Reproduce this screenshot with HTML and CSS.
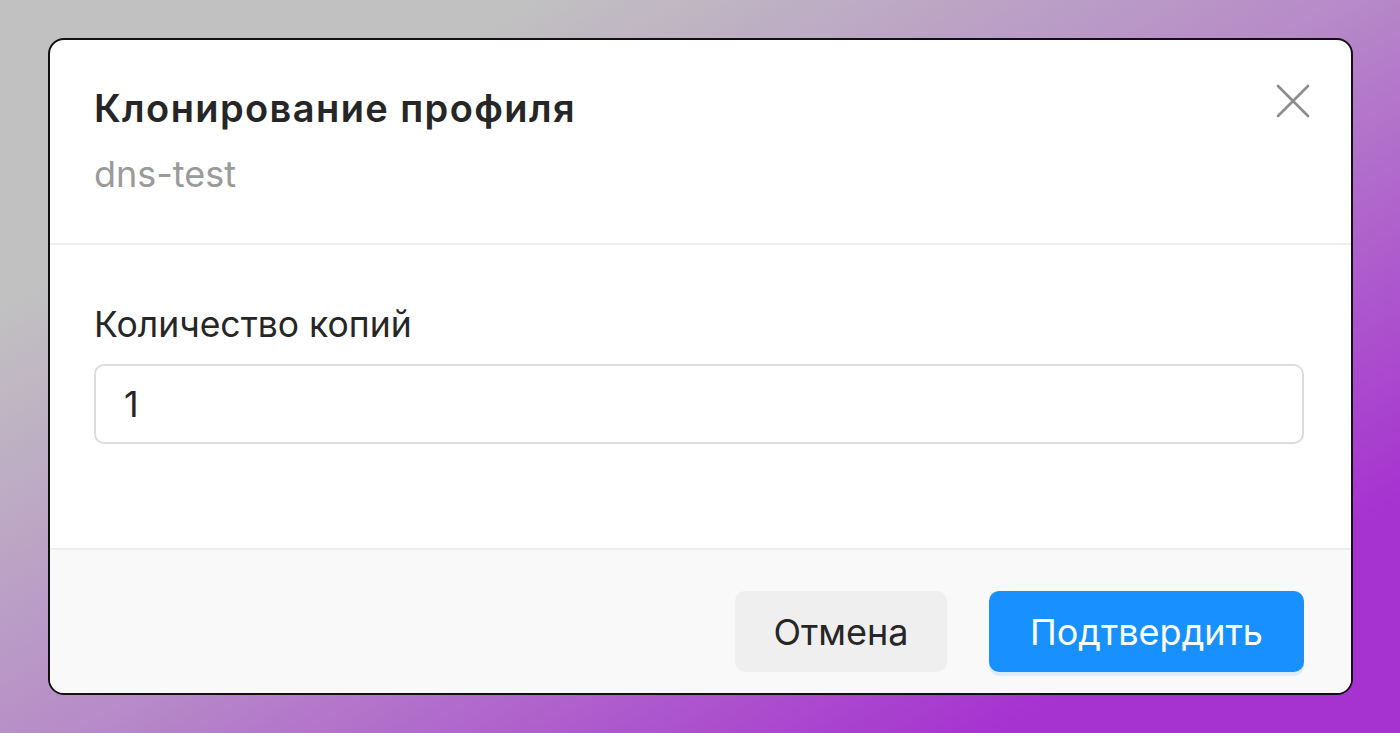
FILE: index.html
```html
<!DOCTYPE html>
<html lang="ru">
<head>
    <meta charset="UTF-8">
    <meta name="viewport" content="width=device-width, initial-scale=1.0">
    <title>Клонирование профиля</title>
    <link rel="stylesheet" href="styles.css">
</head>
<body>
    <!-- Clone profile dialog -->
    <div class="modal">
        <div class="modal-header">
            <div class="modal-titles">
                <h1 class="modal-title">Клонирование профиля</h1>
                <div class="modal-subtitle">dns-test</div>
            </div>
            <button class="close-button" aria-label="Закрыть">
                <svg width="34" height="34" viewBox="0 0 34 34">
                    <path d="M2 2 L32 32 M32 2 L2 32" stroke="#8c8c8c" stroke-width="2.6" stroke-linecap="round" fill="none"/>
                </svg>
            </button>
        </div>

        <div class="modal-body">
            <label class="field-label" for="copies">Количество копий</label>
            <input class="field-input" type="text" id="copies" value="1">
        </div>

        <div class="modal-footer">
            <button class="btn btn-cancel">Отмена</button>
            <button class="btn btn-primary">Подтвердить</button>
        </div>
    </div>
</body>
</html>
```

FILE: styles.css
```css
* {
    box-sizing: border-box;
}
body {
    margin: 0;
    height: 100vh;
    padding: 38px 47px 38px 48px;
    font-family: Inter, "Noto Sans", sans-serif;
    background: linear-gradient(150deg, #c1c1c1 20%, #b78cc8 50%, #a632d0 85%);
    overflow: hidden;
}
.modal {
    background: #fff;
    border: 2px solid #111;
    border-radius: 16px;
    height: 657px;
    overflow: hidden;
    display: flex;
    flex-direction: column;
}
.modal-header {
    display: flex;
    justify-content: space-between;
    align-items: flex-start;
    padding: 48px 41px 49px 44px;
    border-bottom: 2px solid #f0f0f0;
}
.modal-title {
    margin: 0;
    font-size: 38px;
    line-height: 40px;
    font-weight: 600;
    color: #262626;
    letter-spacing: 1.4px;
}
.modal-subtitle {
    margin-top: 26px;
    font-size: 36px;
    line-height: 40px;
    color: #9a9a9a;
}
.close-button {
    background: none;
    border: none;
    padding: 0;
    margin-top: -4px;
    width: 34px;
    height: 34px;
    cursor: pointer;
}
.close-button svg {
    display: block;
}
.modal-body {
    padding: 60px 47px 0 44px;
    flex: 1;
}
.field-label {
    display: block;
    font-size: 35.5px;
    line-height: 40px;
    color: #262626;
}
.field-input {
    display: block;
    width: 100%;
    height: 80px;
    margin-top: 19px;
    padding: 0 28px;
    border: 2px solid #dcdcdc;
    border-radius: 10px;
    font-family: inherit;
    font-size: 36px;
    color: #262626;
    outline: none;
}
.modal-footer {
    display: flex;
    justify-content: flex-end;
    gap: 42px;
    padding: 41px 47px 21px;
    background: #f9f9f9;
    border-top: 2px solid #ececec;
}
.btn {
    height: 81px;
    border: none;
    border-radius: 10px;
    font-family: inherit;
    font-size: 36px;
    cursor: pointer;
}
.btn-cancel {
    width: 212px;
    background: #efefef;
    color: #262626;
}
.btn-primary {
    width: 315px;
    background: #1890ff;
    color: #fff;
    box-shadow: 0 4px 0 rgba(24, 144, 255, 0.12);
}
```
